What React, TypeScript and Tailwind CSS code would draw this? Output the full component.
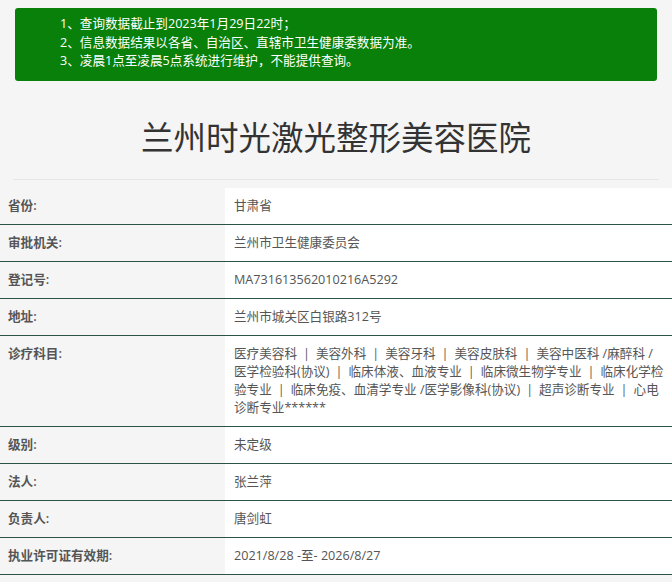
const notices = [
  "1、查询数据截止到2023年1月29日22时；",
  "2、信息数据结果以各省、自治区、直辖市卫生健康委数据为准。",
  "3、凌晨1点至凌晨5点系统进行维护，不能提供查询。",
];

// lines of the subjects cell as they wrap in the original
const subjectLines = [
  ["医疗美容科", "美容外科", "美容牙科", "美容皮肤科", "美容中医科 /麻醉科 /"],
  ["医学检验科(协议)", "临床体液、血液专业", "临床微生物学专业", "临床化学检"],
  ["验专业", "临床免疫、血清学专业 /医学影像科(协议)", "超声诊断专业", "心电"],
  ["诊断专业******"],
];

const Subjects = () => (
  <>
    {subjectLines.map((line, li) => (
      <span key={li} className="block whitespace-nowrap">
        {line.map((s, i) => (
          <span key={s}>
            {s}
            {i < line.length - 1 && <span className="mx-[6px]">|</span>}
          </span>
        ))}
      </span>
    ))}
  </>
);

const rows: { label: string; value: React.ReactNode }[] = [
  { label: "省份:", value: "甘肃省" },
  { label: "审批机关:", value: "兰州市卫生健康委员会" },
  { label: "登记号:", value: "MA731613562010216A5292" },
  { label: "地址:", value: "兰州市城关区白银路312号" },
  { label: "诊疗科目:", value: <Subjects /> },
  { label: "级别:", value: "未定级" },
  { label: "法人:", value: "张兰萍" },
  { label: "负责人:", value: "唐剑虹" },
  { label: "执业许可证有效期:", value: "2021/8/28 -至- 2026/8/27" },
];

export default function App() {
  return (
    <div
      className="min-h-screen bg-[#f5f5f5] pt-[8px] text-[12.6px] text-[#555]"
      style={{ fontFamily: '"Open Sans", "Noto Sans CJK SC", sans-serif' }}
    >
      <div className="mx-[15px] rounded-[3px] bg-[#08800a] px-[45px] pt-[7px] pb-[10px] text-[12.6px] leading-[18.5px] text-white">
        {notices.map((n) => (
          <p key={n}>{n}</p>
        ))}
      </div>

      <div className="mx-[13px] mt-[37px] border-b border-[#e6e6e6] pb-[21px]">
        <h1 className="text-center text-[32.5px] leading-[40px] font-normal text-[#333]">
          兰州时光激光整形美容医院
        </h1>
      </div>

      <div className="mt-[8px]">
        {rows.map((row) => (
          <div
            key={row.label}
            className="grid grid-cols-[225px_1fr] border-b border-[#2b5446]"
          >
            <div className="px-[8px] py-[9px] leading-[18px] font-semibold text-[#555]">
              {row.label}
            </div>
            <div className="bg-white pl-[9px] pr-[8px] py-[9px] leading-[18px]">
              {row.value}
            </div>
          </div>
        ))}
      </div>
    </div>
  );
}
